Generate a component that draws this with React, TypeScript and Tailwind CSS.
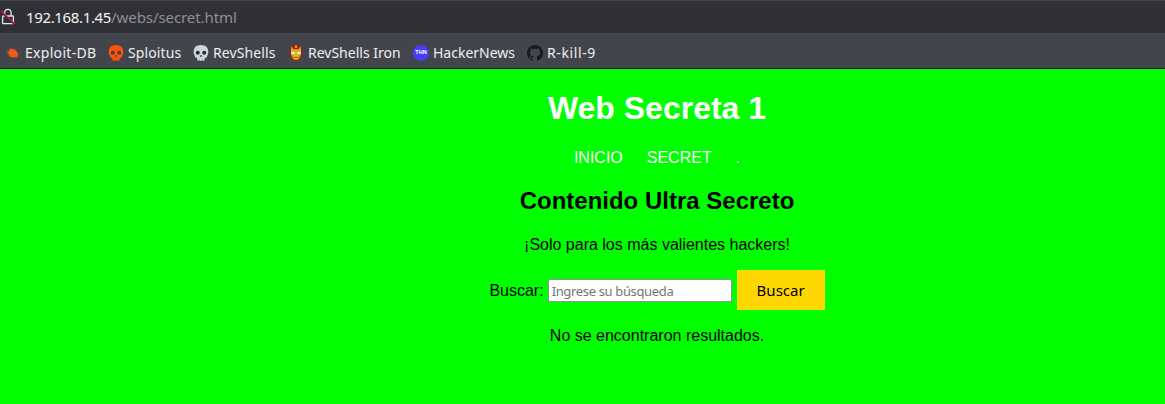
import type { ReactNode } from 'react';

const ExploitIcon = () => (
  <svg viewBox="0 0 16 16" className="size-4 shrink-0">
    <path d="M.8 5.2 4 6 5.5 3.2 8 4.2l2 .6L12.3 7l-.3 1.2 3 1-2.6.5 1 1.8-2-.1.6 1.7-2.6-1-2.2.8.2-1-2.9.2 1.1-1.4-2.4-.3 1.4-1.2-3-1.9 2.2-.2Z" fill="#ef5b14" />
    <path d="m3 4 3 2m3.5-2.8-1 2M2 10.5l3-1" stroke="#a9583a" strokeWidth=".6" />
  </svg>
);

const Skull = ({ color, hole }: { color: string; hole: string }) => (
  <svg viewBox="0 0 16 16" className="size-4 shrink-0">
    <path d="M8 0C3.3 0 .7 2.8.7 6.6c0 2.1.3 2.8.9 3.6.5.8.2 2 .9 2.3.5.3 1.4 0 1.6.6l.3 1.8c.1.7.8.9 1.4.9h4.4c.6 0 1.3-.2 1.4-.9l.3-1.8c.2-.6 1.1-.3 1.6-.6.7-.3.4-1.5.9-2.3.6-.8.9-1.5.9-3.6C15.3 2.8 12.7 0 8 0Z" fill={color} />
    <circle cx="4.8" cy="7.7" r="2" fill={hole} />
    <circle cx="11.2" cy="7.7" r="2" fill={hole} />
    <path d="M8 10 7.1 11.4h1.8ZM6.3 14.4V16m3.4-1.6V16" fill={hole} stroke={hole} strokeWidth=".4" />
  </svg>
);

const IronIcon = () => (
  <svg viewBox="0 0 16 16" className="size-4 shrink-0">
    <path d="M3 .5 5 0h6l2 .5 1 4.5.5 2-.6 3-1.4 3.5L10.5 16h-5L3.5 13.5 2.1 10l-.6-3L2 5Z" fill="#941c17" />
    <path d="m3.6 1 1.8 3.2h5.2L12.4 1l.7 5-.4 5L10 14.8H6L3.3 11l-.4-5Z" fill="#dfb426" />
    <path d="M5.5 0h5l-.9 4.2H6.4Z" fill="#a91e18" />
    <path d="M6.7.8h2.6L8.8 3H7.2Z" fill="#e6b42c" />
    <path d="m3 7 3.9.6-.4 1.4-3.2-.5Zm10 0-3.9.6.4 1.4 3.2-.5Z" fill="#e3fbff" />
    <path d="M5.7 12.4h4.6M3.4 10l1.7 1.8m7.5-1.8-1.7 1.8" stroke="#96431a" strokeWidth=".8" />
  </svg>
);

const NewsIcon = () => (
  <span className="flex size-4 shrink-0 items-center justify-center rounded-full bg-[#493ff2]">
    <span className="font-['Liberation_Sans',sans-serif] text-[5.5px] leading-none font-bold text-white">THN</span>
  </span>
);

const GithubIcon = () => (
  <svg viewBox="0 0 16 16" className="size-4 shrink-0" fill="#181a1e">
    <path d="M8 0C3.58 0 0 3.58 0 8c0 3.54 2.29 6.53 5.47 7.59.4.07.55-.17.55-.38 0-.19-.01-.82-.01-1.49-2.01.37-2.53-.49-2.69-.94-.09-.23-.48-.94-.82-1.13-.28-.15-.68-.52-.01-.53.63-.01 1.08.58 1.23.82.72 1.21 1.87.87 2.33.66.07-.52.28-.87.51-1.07-1.78-.2-3.64-.89-3.64-3.95 0-.87.31-1.59.82-2.15-.08-.2-.36-1.02.08-2.12 0 0 .67-.21 2.2.82a7.6 7.6 0 0 1 4 0c1.53-1.04 2.2-.82 2.2-.82.44 1.1.16 1.92.08 2.12.51.56.82 1.27.82 2.15 0 3.07-1.87 3.75-3.65 3.95.29.25.54.73.54 1.48 0 1.07-.01 1.93-.01 2.2 0 .21.15.46.55.38A8.01 8.01 0 0 0 16 8c0-4.42-3.58-8-8-8Z" />
  </svg>
);

const Bookmark = ({ icon, label, className }: { icon: ReactNode; label: string; className: string }) => (
  <a className={`flex shrink-0 items-center gap-1 whitespace-nowrap ${className}`}>
    {icon}
    <span>{label}</span>
  </a>
);

export default function App() {
  return (
    <div className="flex h-[404px] w-full flex-col overflow-hidden bg-[#00ff00] font-['Liberation_Sans',sans-serif] text-base text-black">
      <header className="shrink-0 font-['Noto_Sans',sans-serif]">
        <div className="flex h-[33px] items-center border-t border-[#42414b] bg-[#303136] text-[15px]">
          <svg viewBox="0 0 16 18" className="mr-[10px] h-[18px] w-4 shrink-0" fill="none">
            <path d="M4.7 8V4.5a3.2 3.2 0 0 1 6.4 0V8M3.4 8h9.2a.8.8 0 0 1 .8.8v6.1a.8.8 0 0 1-.8.8H3.4a.8.8 0 0 1-.8-.8V8.8a.8.8 0 0 1 .8-.8Z" stroke="#e5e5e7" strokeWidth="1.3" />
            <path d="m2 3 13.5 12.5" stroke="#303136" strokeWidth="1.8" transform="translate(-.9 .8)" />
            <path d="M1 2.8 15 16" stroke="#e3194f" strokeWidth="1.3" />
          </svg>
          <span className="tracking-[-0.35px] text-[#f4f4f5]">192.168.1.45</span>
          <span className="tracking-[-0.08px] text-[#8f8f93]">/webs/secret.html</span>
        </div>
        <nav className="flex h-9 items-center border-b border-[#15151a] bg-[#43454c] pt-1 pl-[5px] text-sm text-[#eeeeef]">
          <Bookmark icon={<ExploitIcon />} label="Exploit-DB" className="w-[103px] tracking-[0.3px]" />
          <Bookmark icon={<Skull color="#ff5208" hole="#43454c" />} label="Sploitus" className="w-[85px] tracking-[0.1px]" />
          <Bookmark icon={<Skull color="#cbd5dc" hole="#292e35" />} label="RevShells" className="w-[95px] tracking-[0.1px]" />
          <Bookmark icon={<IronIcon />} label="RevShells Iron" className="w-[125px]" />
          <Bookmark icon={<NewsIcon />} label="HackerNews" className="w-[114px]" />
          <Bookmark icon={<GithubIcon />} label="R-kill-9" className="w-[80px] tracking-[0.6px]" />
        </nav>
      </header>
      <main className="flex w-[1314px] shrink-0 flex-col items-center">
        <h1 className="mt-[21px] text-[32px] leading-[37px] font-bold text-white">Web Secreta 1</h1>
        <nav className="mt-[22px] flex gap-6 leading-[18px] text-white">
          <a>INICIO</a>
          <a>SECRET</a>
          <a>.</a>
        </nav>
        <h2 className="mt-5 text-2xl leading-[27px] font-bold">Contenido Ultra Secreto</h2>
        <p className="mt-[22px] leading-[18px]">¡Solo para los más valientes hackers!</p>
        <form className="mt-4 flex h-10 items-center" onSubmit={(e) => e.preventDefault()}>
          <label htmlFor="search" className="pt-0.5">Buscar:</label>
          <input
            id="search"
            placeholder="Ingrese su búsqueda"
            className="mt-px ml-1 h-[23px] w-[184px] rounded-[2px] border border-[#8f8f9d] bg-white px-[3px] font-['Noto_Sans',sans-serif] text-[13px] tracking-[-0.35px] placeholder:text-[#757575]"
          />
          <button className="ml-[5px] h-10 w-[88px] bg-[#ffd700] font-['Noto_Sans',sans-serif] text-[15px]">Buscar</button>
        </form>
        <p className="mt-[17px] leading-[18px]">No se encontraron resultados.</p>
      </main>
    </div>
  );
}
